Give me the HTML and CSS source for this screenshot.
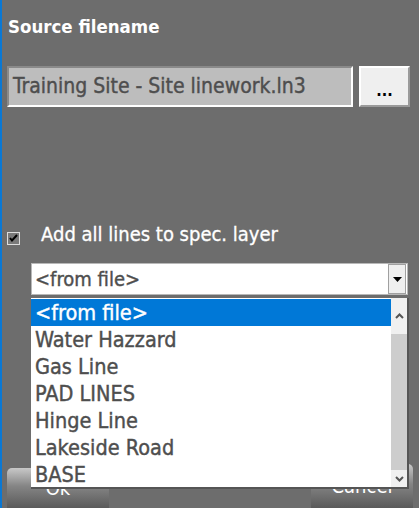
FILE: index.html
```html
<!DOCTYPE html>
<html lang="en">

<head>
  <meta charset="UTF-8">
  <meta name="viewport" content="width=device-width, initial-scale=1.0">
  <title>Import Linework</title>
  <link rel="stylesheet" href="styles.css">
</head>

<body>
  <div class="dialog">
    <h1 class="title">Source filename</h1>

    <!-- file name field and browse button -->
    <div class="file-row">
      <div class="file-field">Training Site - Site linework.ln3</div>
      <button class="browse">...</button>
    </div>

    <label class="check-row">
      <span class="checkbox">
        <svg width="9" height="8" viewBox="0 0 9 8"><path d="M1 4 L3 6.5 L8 1" fill="none" stroke="#000" stroke-width="2"/></svg>
      </span>
      <span class="check-label">Add all lines to spec. layer</span>
    </label>

    <div class="combo">
      <span class="combo-text">&lt;from file&gt;</span>
      <span class="combo-btn">
        <svg width="9" height="5" viewBox="0 0 9 5"><path d="M0 0 H9 L4.5 5 Z" fill="#000"/></svg>
      </span>
    </div>

    <div class="buttons">
      <button class="action ok">Ok</button>
      <button class="action cancel">Cancel</button>
    </div>

    <!-- open dropdown list, lies over the buttons -->
    <div class="dropdown">
      <ul class="options">
        <li class="selected">&lt;from file&gt;</li>
        <li>Water Hazzard</li>
        <li>Gas Line</li>
        <li>PAD LINES</li>
        <li>Hinge Line</li>
        <li>Lakeside Road</li>
        <li>BASE</li>
      </ul>
      <div class="scrollbar">
        <span class="arrow">
          <svg width="9" height="6" viewBox="0 0 9 6"><path d="M1 5 L4.5 1.5 L8 5" fill="none" stroke="#555" stroke-width="2"/></svg>
        </span>
        <span class="thumb"></span>
        <span class="arrow">
          <svg width="9" height="6" viewBox="0 0 9 6"><path d="M1 1 L4.5 4.5 L8 1" fill="none" stroke="#555" stroke-width="2"/></svg>
        </span>
      </div>
    </div>
  </div>
</body>

</html>
```

FILE: styles.css
```css
/* dialog in a dark gray panel */

body {
  margin: 0;
  background-color: #6d6d6d;
  font-family: "DejaVu Sans Condensed", "DejaVu Sans", sans-serif;
  overflow: hidden;
}

.dialog {
  position: relative;
  height: 508px;
  border-left: 2px solid #0a78d4;
  padding-left: 5px;
  box-sizing: border-box;
  display: flex;
  flex-direction: column;
}

.title {
  margin: 14px 0 0 1px;
  color: #fff;
  font-size: 18.5px;
  font-weight: bold;
  line-height: 26px;
}

.file-row {
  display: flex;
  gap: 6px;
  margin-top: 26px;
}

.file-field {
  width: 346px;
  height: 41px;
  box-sizing: border-box;
  background-color: #bdbdbd;
  border: 2px solid #fff;
  border-top-color: #8a8a8a;
  border-left-color: #8a8a8a;
  color: #4e4e4e;
  font-size: 21px;
  line-height: 37px;
  padding-left: 4px;
  white-space: nowrap;
  -webkit-text-stroke: 0.4px currentColor;
}

.browse {
  width: 51px;
  height: 41px;
  background-color: #efefef;
  border: 2px solid #9a9a9a;
  border-top-color: #fff;
  border-left-color: #fff;
  font-family: inherit;
  font-size: 16px;
  font-weight: bold;
  padding: 8px 0 0;
}

.check-row {
  display: flex;
  align-items: center;
  margin-top: 120px;
  height: 22px;
}

.checkbox {
  width: 13px;
  height: 13px;
  box-sizing: border-box;
  border: 1px solid #ddd;
  background-color: #7a7a7a;
  display: flex;
  align-items: center;
  justify-content: center;
}

.check-label {
  margin-left: 21px;
  margin-top: -8px;
  color: #fff;
  font-size: 20px;
  -webkit-text-stroke: 0.3px currentColor;
}

.combo {
  margin: 14px 0 0 24px;
  width: 377px;
  height: 32px;
  box-sizing: border-box;
  background-color: #fff;
  border: 1px solid #b8b8b8;
  display: flex;
  align-items: center;
}

.combo-text {
  flex: 1;
  padding-left: 3px;
  color: #4e4e4e;
  font-size: 20px;
  -webkit-text-stroke: 0.4px currentColor;
}

.combo-btn {
  width: 16px;
  height: 28px;
  margin-right: 1px;
  background-color: #efefef;
  border: 1px solid #a0a0a0;
  display: flex;
  align-items: center;
  justify-content: center;
}

.buttons {
  margin-top: auto;
  display: flex;
  justify-content: space-between;
  align-items: flex-end;
  padding-right: 6px;
}

.action {
  width: 102px;
  color: #fff;
  font-family: inherit;
  font-size: 20px;
  border: none;
  border-radius: 5px 5px 0 0;
  background: linear-gradient(#c8c8c8, #858585 45%, #5a5a5a);
}

.ok {
  height: 40px;
}

.cancel {
  height: 44px;
}

.dropdown {
  position: absolute;
  left: 29px;
  top: 298px;
  width: 378px;
  height: 191px;
  box-sizing: border-box;
  background-color: #fff;
  border-right: 2px solid #555;
  border-bottom: 2px solid #555;
  display: flex;
}

.options {
  flex: 1;
  margin: 0;
  padding: 0;
  list-style: none;
}

.options li {
  height: 27px;
  line-height: 27px;
  padding-left: 4px;
  color: #4e4e4e;
  font-size: 21.5px;
  -webkit-text-stroke: 0.4px currentColor;
}

.options li.selected {
  margin-top: 1px;
  background-color: #0078d7;
  color: #fff;
}

.scrollbar {
  width: 16px;
  background-color: #f0f0f0;
  display: flex;
  flex-direction: column;
}

.arrow {
  height: 36px;
  display: flex;
  align-items: center;
  justify-content: center;
}

.arrow:last-child {
  height: 17px;
}

.thumb {
  flex: 1;
  background-color: #cdcdcd;
}
```
